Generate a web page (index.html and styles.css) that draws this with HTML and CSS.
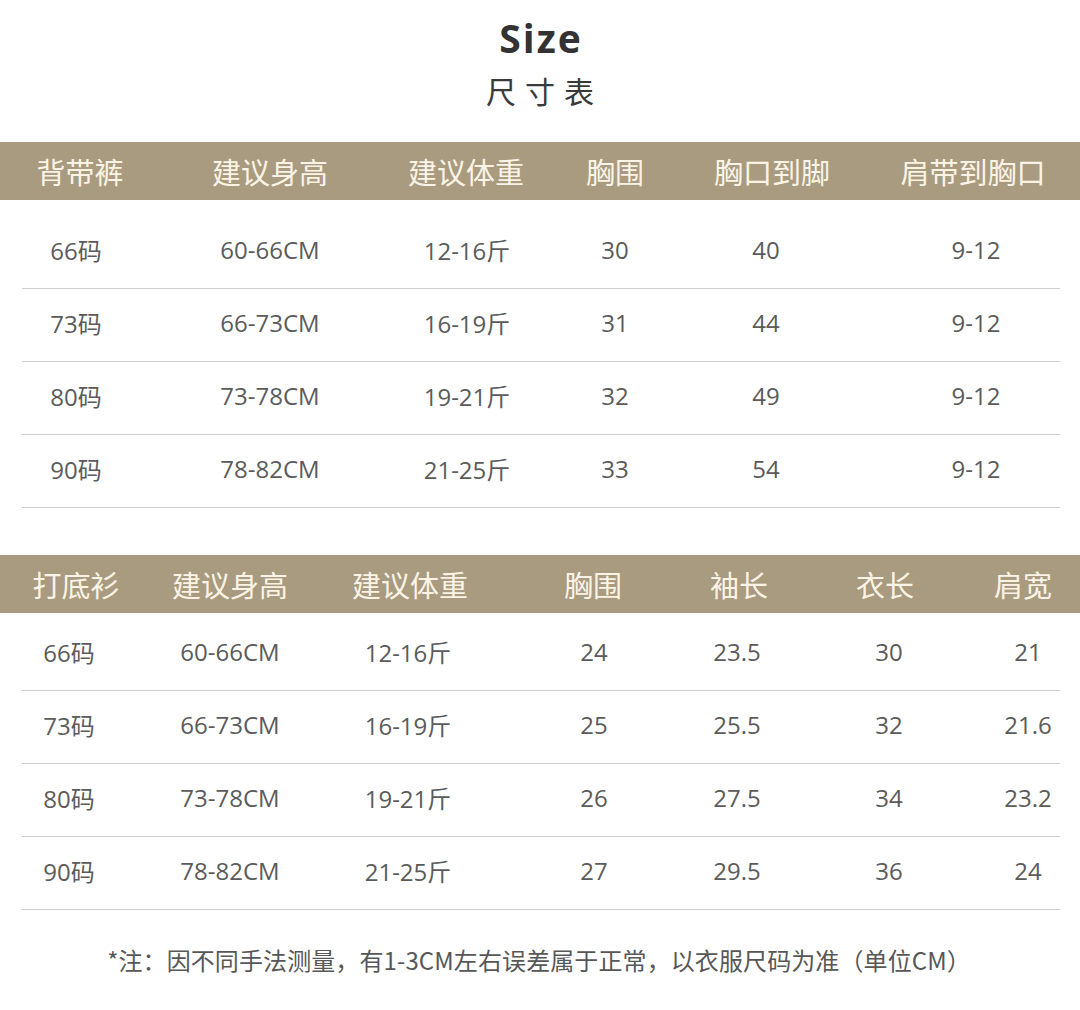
FILE: index.html
```html
<!DOCTYPE html>
<html lang="zh">
<head>
<meta charset="utf-8">
<title>Size 尺寸表</title>
<link rel="stylesheet" href="styles.css">
</head>
<body>
<div class="page">
  <header class="title">
    <h1 class="title-en">Size</h1>
    <div class="title-cn">尺寸表</div>
  </header>

  <section class="table t1">
    <div class="head">
      <div>背带裤</div><div>建议身高</div><div>建议体重</div><div>胸围</div><div>胸口到脚</div><div>肩带到胸口</div>
    </div>
    <div class="rows">
      <div class="row"><div>66码</div><div>60-66CM</div><div>12-16斤</div><div>30</div><div>40</div><div>9-12</div></div>
      <div class="row"><div>73码</div><div>66-73CM</div><div>16-19斤</div><div>31</div><div>44</div><div>9-12</div></div>
      <div class="row"><div>80码</div><div>73-78CM</div><div>19-21斤</div><div>32</div><div>49</div><div>9-12</div></div>
      <div class="row"><div>90码</div><div>78-82CM</div><div>21-25斤</div><div>33</div><div>54</div><div>9-12</div></div>
    </div>
  </section>

  <section class="table t2">
    <div class="head">
      <div>打底衫</div><div>建议身高</div><div>建议体重</div><div>胸围</div><div>袖长</div><div>衣长</div><div>肩宽</div>
    </div>
    <div class="rows">
      <div class="row"><div>66码</div><div>60-66CM</div><div>12-16斤</div><div>24</div><div>23.5</div><div>30</div><div>21</div></div>
      <div class="row"><div>73码</div><div>66-73CM</div><div>16-19斤</div><div>25</div><div>25.5</div><div>32</div><div>21.6</div></div>
      <div class="row"><div>80码</div><div>73-78CM</div><div>19-21斤</div><div>26</div><div>27.5</div><div>34</div><div>23.2</div></div>
      <div class="row"><div>90码</div><div>78-82CM</div><div>21-25斤</div><div>27</div><div>29.5</div><div>36</div><div>24</div></div>
    </div>
  </section>

  <p class="note">*注：因不同手法测量，有1-3CM左右误差属于正常，以衣服尺码为准（单位CM）</p>
</div>
</body>
</html>
```

FILE: styles.css
```css
html, body {
  margin: 0;
  padding: 0;
  background: #ffffff;
}

body {
  font-family: "Open Sans", "Noto Sans CJK SC", sans-serif;
  color: #5b5b5b;
  width: 1080px;
}

.page {
  padding-top: 15px;
}

.title {
  text-align: center;
}

.title-en {
  margin: 0;
  font-size: 39px;
  line-height: 46px;
  font-weight: 700;
  color: #333333;
  letter-spacing: 2px;
  padding-left: 2px;
}

.title-cn {
  margin-top: 11px;
  font-family: "Noto Sans CJK SC", sans-serif;
  font-size: 30px;
  line-height: 36px;
  color: #3a3a3a;
  letter-spacing: 9px;
  padding-left: 9px;
}

.head {
  display: grid;
  height: 58px;
  align-items: center;
  background: #a99b7f;
  color: #fbf4e6;
  font-family: "Noto Sans CJK SC", sans-serif;
  font-size: 29px;
  text-align: center;
}

.row {
  display: grid;
  box-sizing: border-box;
  height: 73px;
  padding-bottom: 6px;
  align-items: center;
  border-bottom: 1px solid #cfcfcf;
  margin: 0 20px 0 22px;
  font-size: 24px;
  text-align: center;
}

.t1 {
  margin-top: 34px;
}

.t1 .head {
  grid-template-columns: 160px 220px 172px 126px 188px 214px;
}

.t1 .rows {
  margin-top: 16px;
}

.t1 .row {
  grid-template-columns: 151px 196px 172px 150px 180px 189px;
}

.t1 .row > div:nth-child(1) { padding-right: 43px; }
.t1 .row > div:nth-child(2) { padding-right: 2px; }
.t1 .row > div:nth-child(3) { padding-left: 24px; }
.t1 .row > div:nth-child(4) { padding-right: 2px; }
.t1 .row > div:nth-child(5) { padding-right: 30px; }
.t1 .row > div:nth-child(6) { padding-left: 21px; }

.t2 {
  margin-top: 47px;
}

.t2 .head {
  grid-template-columns: 152px 156px 204px 162px 130px 162px 114px;
}

.t2 .rows {
  margin-top: 5px;
}

.t2 .row {
  grid-template-columns: 128px 169px 182px 165px 147px 146px 101px;
}

.t2 .row > div:nth-child(1) { padding-right: 34px; }
.t2 .row > div:nth-child(2) { padding-right: 9px; }
.t2 .row > div:nth-child(3) { padding-right: 4px; }
.t2 .row > div:nth-child(4) { padding-left: 21px; }
.t2 .row > div:nth-child(5) { padding-right: 5px; }
.t2 .row > div:nth-child(6) { padding-left: 6px; }
.t2 .row > div:nth-child(7) { padding-left: 37px; }

.note {
  margin: 35px 0 0;
  font-family: "Noto Sans CJK SC", sans-serif;
  font-size: 24px;
  line-height: 30px;
  color: #575757;
  text-align: center;
  letter-spacing: 0.1px;
  padding-right: 2px;
}
```
